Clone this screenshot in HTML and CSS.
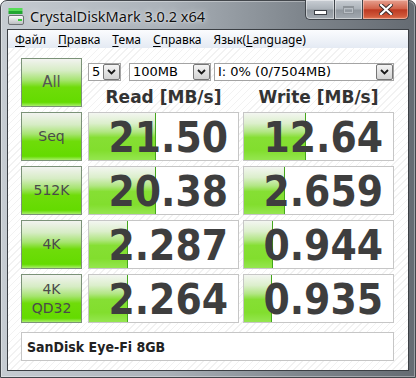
FILE: index.html
```html
<!DOCTYPE html>
<html>
<head>
<meta charset="utf-8">
<link rel="stylesheet" href="styles.css">
</head>
<body>
<div class="window">
  <div class="titlebar">
    <svg class="app-icon" width="16" height="18" viewBox="0 0 16 18">
      <defs>
        <linearGradient id="drv" x1="0" y1="0" x2="0" y2="1">
          <stop offset="0" stop-color="#ffffff"/>
          <stop offset="1" stop-color="#b8bcbe"/>
        </linearGradient>
      </defs>
      <rect x="0.5" y="1" width="14" height="3" fill="#56dc56"/>
      <rect x="0.5" y="4" width="14" height="3" fill="#22a632"/>
      <rect x="0.5" y="8.5" width="15" height="9" rx="1.5" fill="url(#drv)" stroke="#6c7074"/>
      <rect x="10" y="12" width="4" height="2" fill="#3ccf3c"/>
    </svg>
    <span class="title">CrystalDiskMark 3.0.2 x64</span>
    <div class="controls">
      <div class="ctl min"><span class="min-glyph"></span></div>
      <div class="ctl max"><span class="max-glyph"></span></div>
      <div class="ctl close">
        <svg width="14" height="11" viewBox="0 0 14 11">
          <path d="M2 1 L12 10 M12 1 L2 10" stroke="#3a2a28" stroke-width="4" stroke-linecap="square"/>
          <path d="M2 1 L12 10 M12 1 L2 10" stroke="#ffffff" stroke-width="2.2" stroke-linecap="square"/>
        </svg>
      </div>
    </div>
  </div>
  <div class="client">
    <div class="menubar">
      <span class="menu"><u>Ф</u>айл</span>
      <span class="menu"><u>П</u>равка</span>
      <span class="menu"><u>Т</u>ема</span>
      <span class="menu"><u>С</u>правка</span>
      <span class="menu">Язык(<u>L</u>anguage)</span>
    </div>
    <div class="content">
      <div class="board">
        <div class="btn all">All</div>
        <div class="top">
          <div class="selects">
            <div class="select s-count"><span class="val">5</span><span class="arrow"><svg width="9" height="6" viewBox="0 0 9 6"><path d="M1 1 L4.5 4.5 L8 1" fill="none" stroke="#1a1a1a" stroke-width="1.8"/></svg></span></div>
            <div class="select s-size"><span class="val">100MB</span><span class="arrow"><svg width="9" height="6" viewBox="0 0 9 6"><path d="M1 1 L4.5 4.5 L8 1" fill="none" stroke="#1a1a1a" stroke-width="1.8"/></svg></span></div>
            <div class="select s-drive"><span class="val">I: 0% (0/7504MB)</span><span class="arrow"><svg width="9" height="6" viewBox="0 0 9 6"><path d="M1 1 L4.5 4.5 L8 1" fill="none" stroke="#1a1a1a" stroke-width="1.8"/></svg></span></div>
          </div>
          <div class="heads">
            <div class="head">Read [MB/s]</div>
            <div class="head">Write [MB/s]</div>
          </div>
        </div>

        <div class="btn">Seq</div>
        <div class="cell"><div class="bar" style="width:66px"></div><span class="num">21.50</span></div>
        <div class="cell"><div class="bar" style="width:61px"></div><span class="num">12.64</span></div>

        <div class="btn">512K</div>
        <div class="cell"><div class="bar" style="width:66px"></div><span class="num">20.38</span></div>
        <div class="cell"><div class="bar" style="width:40px"></div><span class="num">2.659</span></div>

        <div class="btn">4K</div>
        <div class="cell"><div class="bar" style="width:38px"></div><span class="num">2.287</span></div>
        <div class="cell"><div class="bar" style="width:28px"></div><span class="num">0.944</span></div>

        <div class="btn two">4K<br>QD32</div>
        <div class="cell"><div class="bar" style="width:38px"></div><span class="num">2.264</span></div>
        <div class="cell"><div class="bar" style="width:27px"></div><span class="num">0.935</span></div>

        <div class="comment">SanDisk Eye-Fi 8GB</div>
      </div>
    </div>
  </div>
</div>
</body>
</html>
```

FILE: styles.css
```css
html, body {
  margin: 0;
  padding: 0;
  background: #ffffff;
}

.window {
  width: 416px;
  height: 378px;
  box-sizing: border-box;
  border: 1px solid #43474c;
  border-radius: 7px 7px 0 0;
  padding: 0 6px 6px;
  display: flex;
  flex-direction: column;
  background: linear-gradient(to right, #c6ccd2 0%, #aab1b8 40%, #7f868d 72%, #656b72 100%);
  box-shadow: inset 0 0 0 1px rgba(255, 255, 255, 0.35);
}

.titlebar {
  height: 28px;
  display: flex;
  align-items: center;
  flex-shrink: 0;
}

.app-icon {
  margin-left: 1px;
  margin-top: 2px;
  flex-shrink: 0;
}

.title {
  margin-left: 6px;
  font-family: "Noto Sans", "Open Sans", sans-serif;
  font-size: 14.5px;
  color: #101010;
  text-shadow: 0 0 6px rgba(255, 255, 255, 0.9), 0 0 2px rgba(255, 255, 255, 0.8);
  margin-top: 1px;
}

.controls {
  margin-left: auto;
  align-self: flex-start;
  display: flex;
  height: 20px;
  margin-top: -1px;
}

.ctl {
  height: 20px;
  box-sizing: border-box;
  display: flex;
  align-items: center;
  justify-content: center;
  border: 1px solid #3f444a;
  border-top: none;
}

.min {
  width: 29px;
  border-radius: 0 0 0 5px;
  border-right: none;
  background: linear-gradient(#c9ced4 0%, #aab1b8 48%, #8f969d 52%, #a3aab1 100%);
  box-shadow: inset 0 0 0 1px rgba(255, 255, 255, 0.45);
}

.max {
  width: 28px;
  border-right: none;
  background: linear-gradient(#c9ced4 0%, #aab1b8 48%, #8f969d 52%, #a3aab1 100%);
  box-shadow: inset 0 0 0 1px rgba(255, 255, 255, 0.45);
}

.close {
  width: 47px;
  border-radius: 0 0 5px 0;
  background: linear-gradient(#e6a090 0%, #d2644c 45%, #bd3a22 52%, #d0583a 85%, #e07a58 100%);
  box-shadow: inset 0 0 0 1px rgba(255, 220, 210, 0.5);
}

.min-glyph {
  width: 11px;
  height: 3px;
  margin-top: 5px;
  background: #ffffff;
  border: 1px solid #3c4046;
}

.max-glyph {
  width: 9px;
  height: 5px;
  border: 1px solid #8d9399;
  border-top-width: 2px;
  box-shadow: inset 0 0 0 1px #b8bec4;
}

.client {
  flex: 1;
  display: flex;
  flex-direction: column;
  border: 1px solid #3b3f44;
  background: #ffffff;
}

.menubar {
  height: 18px;
  flex-shrink: 0;
  display: flex;
  align-items: center;
  padding-left: 1px;
  background: linear-gradient(#fbfcfe, #e4eaf3);
  font-family: "Noto Sans", "Open Sans", sans-serif;
  font-size: 12px;
  color: #000000;
}

.menu {
  padding: 0 6px;
}

.menu u {
  text-decoration-thickness: 1px;
  text-underline-offset: 2px;
}

.content {
  flex: 1;
  padding: 10px 0 0 13px;
  background: repeating-linear-gradient(135deg, #ffffff 0px, #ffffff 4px, #f2f2f2 4px, #f2f2f2 5px);
}

.board {
  display: grid;
  grid-template-columns: 63px 151px 151px;
  column-gap: 4px;
  row-gap: 5px;
}

.btn {
  width: 61px;
  height: 49px;
  box-sizing: border-box;
  border: 1px solid #7b9278;
  background: linear-gradient(#f2f3f0 0%, #d6ecc4 25%, #a6e470 45%, #6fdc0a 60%, #64db00 92%, #a8ee6a 100%);
  display: flex;
  align-items: center;
  justify-content: center;
  text-align: center;
  font-family: "DejaVu Sans", sans-serif;
  font-size: 14px;
  line-height: 19px;
  color: #4a4a4a;
}

.btn.all {
  font-size: 15px;
  color: #555555;
}

.top {
  grid-column: 2 / 4;
  display: flex;
  flex-direction: column;
}

.selects {
  display: flex;
  margin-top: 5px;
  height: 18px;
}

.select {
  height: 18px;
  box-sizing: border-box;
  border: 1px solid #a4a4a4;
  background: #ffffff;
  display: flex;
  align-items: center;
  font-family: "DejaVu Sans", sans-serif;
  font-size: 13px;
  color: #000000;
}

.select .val {
  flex: 1;
  padding-left: 3px;
  line-height: 16px;
}

.select .arrow {
  width: 17px;
  height: 16px;
  box-sizing: border-box;
  border: 1px solid #767676;
  border-radius: 2px;
  background: linear-gradient(#f4f4f4, #d2d2d2);
  display: flex;
  align-items: center;
  justify-content: center;
}

.s-count { width: 33px; }
.s-size { width: 82px; margin-left: 8px; }
.s-drive { width: 180px; margin-left: 3px; }

.heads {
  display: grid;
  grid-template-columns: 151px 151px;
  column-gap: 4px;
  margin-top: 6px;
}

.head {
  text-align: center;
  font-family: "DejaVu Sans", sans-serif;
  font-weight: bold;
  font-size: 17px;
  line-height: 20px;
  color: #333333;
}

.cell {
  position: relative;
  height: 49px;
  box-sizing: border-box;
  border: 1px solid #c6c6c6;
  background: #ffffff;
  text-align: right;
  padding-right: 10px;
  overflow: hidden;
}

.bar {
  position: absolute;
  left: 0;
  top: 0;
  bottom: 0;
  border-right: 1px solid #44a61c;
  background: linear-gradient(#f3f6f1 0%, #dcefcc 22%, #b2e684 40%, #86df34 52%, #82de2e 80%, #95e650 100%);
}

.num {
  position: relative;
  font-family: "DejaVu Sans Condensed", "DejaVu Sans", sans-serif;
  font-stretch: condensed;
  font-weight: bold;
  font-size: 42px;
  line-height: 50px;
  color: #3e3e3e;
}

.comment {
  grid-column: 1 / 4;
  margin-top: 4px;
  width: 373px;
  height: 29px;
  box-sizing: border-box;
  border: 1px solid #c6c6c6;
  background: #ffffff;
  padding-left: 5px;
  display: flex;
  align-items: center;
  font-family: "DejaVu Sans Condensed", "DejaVu Sans", sans-serif;
  font-stretch: condensed;
  font-weight: bold;
  font-size: 14px;
  color: #222222;
}
```
